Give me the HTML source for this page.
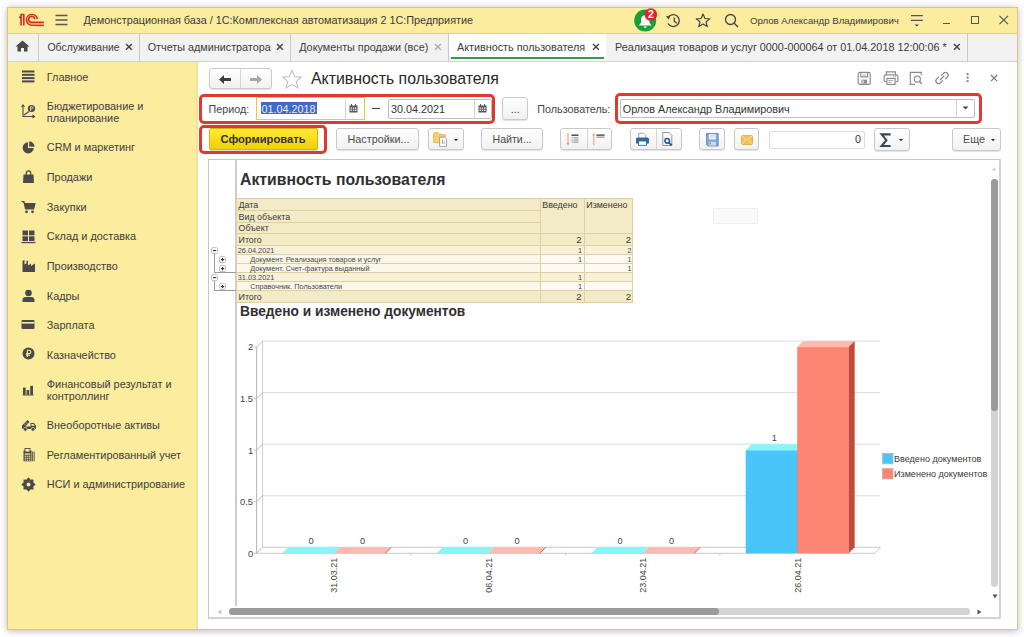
<!DOCTYPE html>
<html><head><meta charset="utf-8"><style>
html,body{margin:0;padding:0;}
body{width:1024px;height:637px;position:relative;overflow:hidden;background:#fff;font-family:"Liberation Sans", sans-serif;}
.t{position:absolute;white-space:nowrap;line-height:1;}
.r{position:absolute;}
svg.r{overflow:visible;}
</style></head><body>
<div class="r" style="left:7px;top:7px;width:1011px;height:623px;background:#fff;box-shadow:0 1px 7px rgba(0,0,0,0.28);"></div><div class="r" style="left:7px;top:7px;width:1011px;height:26px;background:#FBEC9E;"></div><div class="r" style="left:7px;top:33px;width:1011px;height:29px;background:#F2F2F2;border-bottom:1px solid #D2D2D2;box-sizing:border-box;"></div><div class="r" style="left:7px;top:62px;width:191px;height:568px;background:#FBEC9E;"></div><div class="r" style="left:196px;top:62px;width:2px;height:568px;background:#F3E395;"></div><div class="r" style="left:7px;top:7px;width:1011px;height:623px;border:1px solid #D8C77F;box-sizing:border-box;"></div><div class="r" style="left:7px;top:32.5px;width:1011px;height:1.0px;background:#E3D38A;"></div><svg class="r" style="left:14px;top:10px" width="36" height="20" viewBox="0 0 36 20">
<g fill="none" stroke="#DA2A22" stroke-width="1.65" stroke-linejoin="miter">
<path d="M5 7.3 H7.1 M7.1 4.5 V15.6 M6.3 4.5 H10.5 M9.8 4.5 V15.6"/>
<path d="M23.3 9.2 A5.4 5.4 0 1 0 17.9 15.3 H29.8"/>
<path d="M20.6 9.2 A3.0 3.0 0 1 0 17.6 12.3 H29.8"/>
</g>
<path d="M21.9 9.2 A4.2 4.2 0 1 0 17.8 13.8 H29.8" fill="none" stroke="#EE9A70" stroke-width="0.9"/>
</svg><svg class="r" style="left:55px;top:14px" width="14" height="12"><g stroke="#555" stroke-width="1.3"><path d="M0.5 1.5H12.5M0.5 6H12.5M0.5 10.5H12.5"/></g></svg><div class="t" style="left:83.50px;top:15.22px;font-size:10.84px;color:#3a3a3a;">Демонстрационная база / 1С:Комплексная автоматизация 2 1С:Предприятие</div><svg class="r" style="left:632px;top:8px" width="28" height="26" viewBox="0 0 28 26">
<circle cx="13.2" cy="12.5" r="11" fill="#17A03A"/>
<path d="M6.8 17.6 H19.6 L17.4 14.8 V11.5 A4.2 4.2 0 0 0 9 11.5 V14.8 Z" fill="#fff"/>
<path d="M11.6 18.6 H14.8 A1.6 1.4 0 0 1 11.6 18.6Z" fill="#fff"/>
<circle cx="18.8" cy="6.5" r="6.3" fill="#E8212B"/>
<text x="18.8" y="10.2" font-family="Liberation Sans" font-size="10.5" font-weight="bold" fill="#fff" text-anchor="middle">2</text>
</svg><svg class="r" style="left:665px;top:13px" width="18" height="16" viewBox="0 0 18 16">
<g fill="none" stroke="#444" stroke-width="1.3"><path d="M3.3 4.2 A6 6 0 1 1 3 10.5"/><path d="M9.3 4.5 V8.3 L11.8 10.3"/></g>
<path d="M1 3 L5.2 3.2 L3.6 6.8Z" fill="#444"/></svg><svg class="r" style="left:695px;top:13px" width="16" height="15" viewBox="0 0 16 15">
<path d="M8 1 L9.9 5.5 L14.7 5.8 L11 8.9 L12.2 13.6 L8 11 L3.8 13.6 L5 8.9 L1.3 5.8 L6.1 5.5Z" fill="none" stroke="#444" stroke-width="1.2" stroke-linejoin="round"/></svg><svg class="r" style="left:724px;top:13px" width="16" height="15" viewBox="0 0 16 15">
<g fill="none" stroke="#444" stroke-width="1.3"><circle cx="6.5" cy="6.5" r="5"/><path d="M10.2 10.2 L14 14"/></g></svg><div class="t" style="left:750.00px;top:15.64px;font-size:9.64px;color:#3a3a3a;">Орлов Александр Владимирович</div><svg class="r" style="left:905px;top:10px" width="20" height="20" viewBox="0 0 20 20"><path d="M6 5.6 H17.8 M6 10.4 H17.8" stroke="#555" stroke-width="1.2"/><path d="M9.6 14.4 H14 L11.8 16.6Z" fill="#444"/></svg><div class="r" style="left:942.5px;top:22.8px;width:7.5px;height:1.3000000000000007px;background:#555;"></div><div class="r" style="left:971px;top:16.3px;width:8px;height:7.899999999999999px;border:1.2px solid #555;box-sizing:border-box;"></div><svg class="r" style="left:995px;top:11px" width="18" height="18" viewBox="0 0 18 18"><path d="M4.5 4.8 L13 13.2 M13 4.8 L4.5 13.2" stroke="#555" stroke-width="1.15"/></svg><svg class="r" style="left:15px;top:40px" width="15" height="12" viewBox="0 0 15 12">
<path d="M7.5 0.5 L14.5 6.5 H12.5 V11.5 H9 V8 H6 V11.5 H2.5 V6.5 H0.5Z" fill="#4a4a4a"/></svg><div class="r" style="left:37.8px;top:33px;width:1.0px;height:28px;background:#C9C9C9;"></div><div class="r" style="left:139.0px;top:33px;width:1.0px;height:28px;background:#C9C9C9;"></div><div class="r" style="left:290.0px;top:33px;width:1.0px;height:28px;background:#C9C9C9;"></div><div class="r" style="left:448.0px;top:33px;width:1.0px;height:28px;background:#C9C9C9;"></div><div class="r" style="left:966.9px;top:33px;width:1.0px;height:28px;background:#C9C9C9;"></div><div class="r" style="left:449px;top:33.5px;width:156.5px;height:27.5px;background:#fff;"></div><div class="r" style="left:450.5px;top:57.3px;width:153.0px;height:2.0px;background:#2E9F4E;"></div><div class="t" style="left:47.50px;top:42.55px;font-size:10.45px;color:#3c3c3c;">Обслуживание</div><svg class="r" style="left:125.2px;top:43.0px" width="7.8" height="7.8"><path d="M1 1L6.8 6.8M6.8 1L1 6.8" stroke="#444" stroke-width="1.4"/></svg><div class="t" style="left:147.70px;top:42.26px;font-size:10.8px;color:#3c3c3c;">Отчеты администратора</div><svg class="r" style="left:276.4px;top:43.0px" width="7.8" height="7.8"><path d="M1 1L6.8 6.8M6.8 1L1 6.8" stroke="#444" stroke-width="1.4"/></svg><div class="t" style="left:299.20px;top:42.26px;font-size:10.8px;color:#3c3c3c;">Документы продажи (все)</div><svg class="r" style="left:433.9px;top:43.0px" width="7.8" height="7.8"><path d="M1 1L6.8 6.8M6.8 1L1 6.8" stroke="#aaa" stroke-width="1.3"/></svg><div class="t" style="left:457.00px;top:42.26px;font-size:10.8px;color:#3c3c3c;">Активность пользователя</div><svg class="r" style="left:591.6px;top:43.0px" width="7.8" height="7.8"><path d="M1 1L6.8 6.8M6.8 1L1 6.8" stroke="#444" stroke-width="1.4"/></svg><div class="t" style="left:615.00px;top:42.24px;font-size:10.82px;color:#3c3c3c;">Реализация товаров и услуг 0000-000064 от 01.04.2018 12:00:06 *</div><svg class="r" style="left:952.6px;top:43.0px" width="7.8" height="7.8"><path d="M1 1L6.8 6.8M6.8 1L1 6.8" stroke="#444" stroke-width="1.4"/></svg><div class="t" style="left:46.80px;top:71.52px;font-size:10.9px;color:#404040;">Главное</div><div class="t" style="left:46.80px;top:100.57px;font-size:10.9px;color:#404040;">Бюджетирование и</div><div class="t" style="left:46.80px;top:112.77px;font-size:10.9px;color:#404040;">планирование</div><div class="t" style="left:46.80px;top:142.07px;font-size:10.9px;color:#404040;">CRM и маркетинг</div><div class="t" style="left:46.80px;top:171.97px;font-size:10.9px;color:#404040;">Продажи</div><div class="t" style="left:46.80px;top:201.87px;font-size:10.9px;color:#404040;">Закупки</div><div class="t" style="left:46.80px;top:231.27px;font-size:10.9px;color:#404040;">Склад и доставка</div><div class="t" style="left:46.80px;top:260.97px;font-size:10.9px;color:#404040;">Производство</div><div class="t" style="left:46.80px;top:290.77px;font-size:10.9px;color:#404040;">Кадры</div><div class="t" style="left:46.80px;top:320.17px;font-size:10.9px;color:#404040;">Зарплата</div><div class="t" style="left:46.80px;top:350.07px;font-size:10.9px;color:#404040;">Казначейство</div><div class="t" style="left:46.80px;top:378.97px;font-size:10.9px;color:#404040;">Финансовый результат и</div><div class="t" style="left:46.80px;top:391.17px;font-size:10.9px;color:#404040;">контроллинг</div><div class="t" style="left:46.80px;top:420.17px;font-size:10.9px;color:#404040;">Внеоборотные активы</div><div class="t" style="left:46.80px;top:450.07px;font-size:10.9px;color:#404040;">Регламентированный учет</div><div class="t" style="left:46.80px;top:479.27px;font-size:10.9px;color:#404040;">НСИ и администрирование</div><svg class="r" style="left:22px;top:70px" width="13" height="13" viewBox="0 0 13 13"><g fill="#4a4a4a"><rect x="0" y="0.5" width="12.5" height="2"/><rect x="0" y="3.8" width="12.5" height="2"/><rect x="0" y="7.1" width="12.5" height="2"/><rect x="0" y="10.4" width="12.5" height="2"/></g></svg><svg class="r" style="left:21px;top:104px" width="15" height="15" viewBox="0 0 15 15"><g fill="none" stroke="#4a4a4a" stroke-width="1.1"><path d="M2 1.5 V12.5 H13.5"/><path d="M0.5 3 L2 1 L3.5 3"/><path d="M11.5 11 L13.5 12.5 L11.5 14"/><path d="M3 11 L8 7.5"/></g><circle cx="10.5" cy="4.5" r="3.6" fill="#4a4a4a"/><path d="M9.6 2.7 V7 M9.6 2.7 H11 A1 1 0 0 1 11 4.8 H9" stroke="#FBEC9E" stroke-width="0.8" fill="none"/></svg><svg class="r" style="left:22px;top:141px" width="13" height="13" viewBox="0 0 13 13"><path d="M6 1.2 A5.6 5.6 0 1 0 11.8 7 H6Z" fill="#4a4a4a"/><path d="M7.2 0.3 A5.6 5.6 0 0 1 12.6 5.8 H7.2Z" fill="#4a4a4a"/></svg><svg class="r" style="left:22px;top:170px" width="13" height="14" viewBox="0 0 13 14"><path d="M1.5 4.5 H11.5 L12 13 H1Z" fill="#4a4a4a"/><path d="M4.3 5 V3 A2.2 2.2 0 0 1 8.7 3 V5" fill="none" stroke="#4a4a4a" stroke-width="1.2"/></svg><svg class="r" style="left:21px;top:200px" width="15" height="14" viewBox="0 0 15 14"><path d="M0.5 1.5 H3 L4.5 9 H12.5 L14 3.5 H3.5" fill="#4a4a4a" stroke="#4a4a4a" stroke-width="1.2" stroke-linejoin="round"/><circle cx="5.5" cy="11.8" r="1.4" fill="#4a4a4a"/><circle cx="11.5" cy="11.8" r="1.4" fill="#4a4a4a"/></svg><svg class="r" style="left:21px;top:230px" width="15" height="14" viewBox="0 0 15 14"><g fill="#4a4a4a"><rect x="1.5" y="0.5" width="5.5" height="4.8"/><rect x="8" y="0.5" width="5.5" height="4.8"/><rect x="1.5" y="6.3" width="5.5" height="4.8"/><rect x="8" y="6.3" width="5.5" height="4.8"/><rect x="0.5" y="12" width="14" height="1.2"/></g></svg><svg class="r" style="left:22px;top:259px" width="14" height="14" viewBox="0 0 14 14"><path d="M0.5 13 V2 L2.5 0.8 V5.5 L4.5 4.5 V1.5 L6 2 V6.5 L9 4.5 V7 L13 4.5 V13Z" fill="#4a4a4a"/></svg><svg class="r" style="left:22px;top:289px" width="13" height="14" viewBox="0 0 13 14"><circle cx="6.5" cy="4" r="3.3" fill="#4a4a4a"/><path d="M0.5 13 V11 Q0.5 8 4 8 H9 Q12.5 8 12.5 11 V13Z" fill="#4a4a4a"/></svg><svg class="r" style="left:21px;top:319px" width="15" height="12" viewBox="0 0 15 12"><rect x="0.5" y="1" width="13" height="9" rx="1" fill="#4a4a4a"/><rect x="0.5" y="3" width="13" height="1.6" fill="#FBEC9E"/></svg><svg class="r" style="left:22px;top:347px" width="13" height="13" viewBox="0 0 13 13"><circle cx="6.5" cy="6.5" r="6" fill="#4a4a4a"/><path d="M5.3 3.2 V10 M4 8.3 H8 M5.3 3.2 H7.2 A1.6 1.6 0 0 1 7.2 6.6 H4" stroke="#FBEC9E" stroke-width="1.1" fill="none"/></svg><svg class="r" style="left:22px;top:385px" width="13" height="12" viewBox="0 0 13 12"><g fill="#4a4a4a"><rect x="1" y="2.6" width="2.7" height="7.2"/><rect x="4.6" y="5" width="2.6" height="4.8"/><rect x="8.2" y="0.8" width="2.8" height="9"/><rect x="0.6" y="9.6" width="11" height="0.9"/></g></svg><svg class="r" style="left:20.5px;top:419px" width="16" height="13" viewBox="0 0 16 13"><path d="M1 6.5 L6.5 1 L8.5 3 L4 8 H1Z" fill="#4a4a4a"/><path d="M3 4.5 L5 6.5 M4.5 3 L6.5 5" stroke="#FBEC9E" stroke-width="0.6"/><path d="M1 7.5 H9.5 V4 H13 L15 6.8 V10 H1Z" fill="#4a4a4a"/><path d="M10.4 4.9 H12.5 L13.8 6.8 H10.4Z" fill="#FBEC9E"/><circle cx="4.3" cy="10.3" r="1.9" fill="#4a4a4a" stroke="#FBEC9E" stroke-width="0.7"/><circle cx="12" cy="10.3" r="1.9" fill="#4a4a4a" stroke="#FBEC9E" stroke-width="0.7"/></svg><svg class="r" style="left:22.5px;top:448px" width="12" height="14" viewBox="0 0 12 14"><rect x="0.5" y="2.5" width="8" height="10.8" fill="#4a4a4a"/><rect x="2" y="0.5" width="5" height="3.5" fill="#FBEC9E" stroke="#4a4a4a" stroke-width="0.9"/><g fill="#FBEC9E"><rect x="1.7" y="5.4" width="5.6" height="1.3"/><rect x="1.7" y="7.7" width="1.4" height="1.1"/><rect x="3.8" y="7.7" width="1.4" height="1.1"/><rect x="5.9" y="7.7" width="1.4" height="1.1"/><rect x="1.7" y="9.7" width="1.4" height="1.1"/><rect x="3.8" y="9.7" width="1.4" height="1.1"/><rect x="5.9" y="9.7" width="1.4" height="1.1"/><rect x="1.7" y="11.6" width="1.4" height="1"/><rect x="3.8" y="11.6" width="1.4" height="1"/><rect x="5.9" y="11.6" width="1.4" height="1"/></g><g fill="#4a4a4a"><rect x="9.2" y="3.5" width="0.9" height="9.8"/><rect x="10.7" y="3.5" width="0.9" height="9.8"/></g></svg><svg class="r" style="left:22px;top:478px" width="13" height="13" viewBox="0 0 13 13"><polygon points="12.80,6.50 10.75,8.26 10.95,10.95 8.26,10.75 6.50,12.80 4.74,10.75 2.05,10.95 2.25,8.26 0.20,6.50 2.25,4.74 2.05,2.05 4.74,2.25 6.50,0.20 8.26,2.25 10.95,2.05 10.75,4.74" fill="#4a4a4a" stroke="#4a4a4a" stroke-width="1.2" stroke-linejoin="round"/><circle cx="6.5" cy="6.5" r="1.9" fill="#FBEC9E"/></svg><div class="r" style="left:209px;top:68.3px;width:63px;height:20.900000000000006px;box-sizing:border-box;border:1px solid #C9C9C9;border-radius:3px;background:linear-gradient(#FFFFFF,#F1F1F1);box-shadow:0 1px 1px rgba(0,0,0,0.12);"></div><div class="r" style="left:240px;top:69px;width:1px;height:19.5px;background:#D5D5D5;"></div><svg class="r" style="left:218px;top:73.8px" width="14" height="11" viewBox="0 0 14 11"><path d="M1 5.5 L6 1 V4 H13 V7 H6 V10Z" fill="#3c3c3c"/></svg><svg class="r" style="left:249px;top:73.8px" width="14" height="11" viewBox="0 0 14 11"><path d="M13 5.5 L8 1 V4 H1 V7 H8 V10Z" fill="#A8A8A8"/></svg><svg class="r" style="left:281px;top:68.5px" width="22" height="21" viewBox="0 0 22 21"><path d="M11 1.2 L13.6 7.6 L20.4 8 L15.2 12.4 L16.9 19.1 L11 15.4 L5.1 19.1 L6.8 12.4 L1.6 8 L8.4 7.6Z" fill="none" stroke="#B9C3CA" stroke-width="1.1" stroke-linejoin="round"/></svg><div class="t" style="left:311.00px;top:71.08px;font-size:15.85px;color:#262626;">Активность пользователя</div><svg class="r" style="left:857px;top:71px" width="15" height="15" viewBox="0 0 15 15"><g fill="none" stroke="#8a8a8a" stroke-width="1.15"><rect x="1.2" y="1.4" width="12" height="12" rx="1.6"/><path d="M3.8 1.6 V5.8 H10.6 V1.6"/></g><path d="M5.2 3.2 H9.2 M5.2 4.4 H9.2" stroke="#b5b5b5" stroke-width="0.6"/><rect x="4.4" y="8.6" width="5.6" height="4" fill="#8a8a8a"/><rect x="4.9" y="9.3" width="2.2" height="3" fill="#c9c9c9"/></svg><svg class="r" style="left:883px;top:71px" width="16" height="15" viewBox="0 0 16 15"><g fill="none" stroke="#8a8a8a" stroke-width="1.15"><path d="M3.3 3.8 V0.9 H12.4 V3.8"/><path d="M3.4 10.6 H2.5 Q1.1 10.6 1.1 9.2 V5.3 Q1.1 3.8 2.6 3.8 H13.4 Q14.9 3.8 14.9 5.3 V9.2 Q14.9 10.6 13.5 10.6 H12.5"/><rect x="3.9" y="7.4" width="8.2" height="6.1" fill="#fff"/></g><path d="M5.4 9.4 H10.2 M5.4 11.4 H8.6" stroke="#8a8a8a" stroke-width="0.8"/><circle cx="10.8" cy="5.6" r="0.55" fill="#8a8a8a"/><circle cx="12.6" cy="5.6" r="0.55" fill="#8a8a8a"/></svg><svg class="r" style="left:909px;top:71px" width="14" height="15" viewBox="0 0 14 15"><g fill="none" stroke="#8a8a8a" stroke-width="1.15"><path d="M5.8 13.4 H1.3 V1.4 H12.3 V4.3"/><circle cx="8.3" cy="8.1" r="3.1"/></g><path d="M10.5 10.4 L12.8 12.7" stroke="#8a8a8a" stroke-width="1.6"/></svg><svg class="r" style="left:935px;top:71px" width="15" height="14" viewBox="0 0 15 14"><g fill="none" stroke="#8a8a8a" stroke-width="1.25" stroke-linecap="round"><path d="M6.4 4.4 L8.7 2.1 A2.7 2.7 0 0 1 12.5 5.9 L10.6 7.8"/><path d="M7.6 9.6 L5.3 11.9 A2.7 2.7 0 0 1 1.5 8.1 L3.4 6.2"/><path d="M5.2 8.8 L8.8 5.2"/></g></svg><svg class="r" style="left:965px;top:72px" width="5" height="11" viewBox="0 0 5 11"><g fill="#8a8a8a"><circle cx="2.6" cy="2.1" r="1.2"/><circle cx="2.6" cy="5.6" r="1.2"/><circle cx="2.6" cy="9.1" r="1.2"/></g></svg><svg class="r" style="left:989.7px;top:74.2px" width="8.2" height="8.2"><path d="M1 1L7.2 7.2M7.2 1L1 7.2" stroke="#777" stroke-width="1.2"/></svg><div class="t" style="left:208.50px;top:103.90px;font-size:10.75px;color:#444;">Период:</div><div class="r" style="left:256.4px;top:97.1px;width:108.60000000000002px;height:22.5px;box-sizing:border-box;border:1.5px solid #F5C431;background:#fff;"></div><div class="r" style="left:345px;top:99px;width:1px;height:19px;background:#D4D4D4;"></div><div class="r" style="left:261.1px;top:102.3px;width:55.69999999999999px;height:12.0px;background:#4169C8;"></div><div class="t" style="left:261.50px;top:103.86px;font-size:10.8px;color:#E6ECF8;">01.04.2018</div><svg class="r" style="left:349.2px;top:104.2px" width="9" height="9" viewBox="0 0 9 9"><g fill="#555"><rect x="0.5" y="1.5" width="8" height="7"/></g><g fill="#fff"><rect x="1.5" y="3.5" width="1.5" height="1.2"/><rect x="3.8" y="3.5" width="1.5" height="1.2"/><rect x="6" y="3.5" width="1.5" height="1.2"/><rect x="1.5" y="5.7" width="1.5" height="1.2"/><rect x="3.8" y="5.7" width="1.5" height="1.2"/><rect x="6" y="5.7" width="1.5" height="1.2"/></g><rect x="2" y="0" width="1" height="2" fill="#555"/><rect x="6" y="0" width="1" height="2" fill="#555"/></svg><div class="r" style="left:372px;top:108px;width:7.5px;height:1.2000000000000028px;background:#444;"></div><div class="r" style="left:387.8px;top:99px;width:104.19999999999999px;height:19.5px;box-sizing:border-box;border:1px solid #BDBDBD;border-radius:2px;background:#fff;"></div><div class="r" style="left:474px;top:99px;width:1px;height:18.5px;background:#D4D4D4;"></div><div class="t" style="left:391.00px;top:103.86px;font-size:10.8px;color:#333;">30.04.2021</div><svg class="r" style="left:478px;top:103.5px" width="9" height="9" viewBox="0 0 9 9"><g fill="#555"><rect x="0.5" y="1.5" width="8" height="7"/></g><g fill="#fff"><rect x="1.5" y="3.5" width="1.5" height="1.2"/><rect x="3.8" y="3.5" width="1.5" height="1.2"/><rect x="6" y="3.5" width="1.5" height="1.2"/><rect x="1.5" y="5.7" width="1.5" height="1.2"/><rect x="3.8" y="5.7" width="1.5" height="1.2"/><rect x="6" y="5.7" width="1.5" height="1.2"/></g><rect x="2" y="0" width="1" height="2" fill="#555"/><rect x="6" y="0" width="1" height="2" fill="#555"/></svg><div class="r" style="left:501.5px;top:96.8px;width:26.299999999999955px;height:23.0px;box-sizing:border-box;border:1px solid #C9C9C9;border-radius:3px;background:linear-gradient(#FFFFFF,#F1F1F1);box-shadow:0 1px 1px rgba(0,0,0,0.12);"></div><div class="t" style="left:510.80px;top:104.11px;font-size:10.5px;color:#333;">...</div><div class="t" style="left:537.30px;top:103.86px;font-size:10.8px;color:#444;">Пользователь:</div><div class="r" style="left:620px;top:98.5px;width:354.5px;height:19.0px;box-sizing:border-box;border:1px solid #BDBDBD;border-radius:2px;background:#fff;"></div><div class="r" style="left:956px;top:99.5px;width:1px;height:17.0px;background:#D4D4D4;"></div><div class="t" style="left:622.80px;top:103.86px;font-size:10.8px;color:#333;">Орлов Александр Владимирович</div><svg class="r" style="left:962px;top:106px" width="7" height="4" viewBox="0 0 7 4"><path d="M0.5 0.5H6.5L3.5 3.5Z" fill="#444"/></svg><div class="r" style="left:199px;top:93.8px;width:296px;height:29.799999999999997px;box-sizing:border-box;border:3.4px solid #E03A30;border-radius:5px;"></div><div class="r" style="left:615px;top:93px;width:367px;height:30.599999999999994px;box-sizing:border-box;border:3.4px solid #E03A30;border-radius:5px;"></div><div class="r" style="left:199px;top:125px;width:127.80000000000001px;height:28.80000000000001px;box-sizing:border-box;border:3.4px solid #E03A30;border-radius:5px;"></div><div class="r" style="left:209px;top:128.2px;width:108.60000000000002px;height:21.600000000000023px;box-sizing:border-box;border:1px solid #D4B800;border-radius:2px;background:linear-gradient(#FFEA3A,#F3CF00);box-shadow:0 1px 1px rgba(0,0,0,0.15);"></div><div class="t" style="left:220.50px;top:133.75px;font-size:11.16px;color:#333;font-weight:bold;">Сформировать</div><div class="r" style="left:335.5px;top:128px;width:83.69999999999999px;height:22.30000000000001px;box-sizing:border-box;border:1px solid #C9C9C9;border-radius:3px;background:linear-gradient(#FFFFFF,#F1F1F1);box-shadow:0 1px 1px rgba(0,0,0,0.12);"></div><div class="t" style="left:347.50px;top:134.06px;font-size:10.8px;color:#4a4a4a;">Настройки...</div><div class="r" style="left:427.5px;top:128px;width:36.0px;height:22.30000000000001px;box-sizing:border-box;border:1px solid #C9C9C9;border-radius:3px;background:linear-gradient(#FFFFFF,#F1F1F1);box-shadow:0 1px 1px rgba(0,0,0,0.12);"></div><svg class="r" style="left:433px;top:132px" width="15" height="16" viewBox="0 0 15 16"><path d="M0.6 2.2 Q0.6 0.7 2 0.7 H4.6 Q5.6 0.7 6.2 1.9 L6.6 2.6 H12.2 V10.6 H0.6Z" fill="#F7D36A" stroke="#DDAA45" stroke-width="0.8"/><path d="M0.6 4.2 H12.2" stroke="#F0C250" stroke-width="0.6"/><path d="M6.6 5.2 H11.6 L13.6 7.2 V14.4 H6.6Z" fill="#fff" stroke="#8E9DB3" stroke-width="0.9"/><rect x="8.9" y="7.9" width="1.1" height="3.3" fill="#F07A7A"/><rect x="10.7" y="8.8" width="1.1" height="2.4" fill="#9ED79E"/><path d="M8.2 11.5 H12" stroke="#C9A0A0" stroke-width="0.5"/></svg><svg class="r" style="left:453.6px;top:138.8px" width="4" height="3" viewBox="0 0 4 3"><path d="M0 0H4L2 2.2Z" fill="#333"/></svg><div class="r" style="left:481px;top:128px;width:61.799999999999955px;height:22.30000000000001px;box-sizing:border-box;border:1px solid #C9C9C9;border-radius:3px;background:linear-gradient(#FFFFFF,#F1F1F1);box-shadow:0 1px 1px rgba(0,0,0,0.12);"></div><div class="t" style="left:492.50px;top:134.23px;font-size:10.6px;color:#4a4a4a;">Найти...</div><div class="r" style="left:560px;top:128px;width:51.5px;height:22.30000000000001px;box-sizing:border-box;border:1px solid #C9C9C9;border-radius:3px;background:linear-gradient(#FFFFFF,#F1F1F1);box-shadow:0 1px 1px rgba(0,0,0,0.12);"></div><div class="r" style="left:586.5px;top:128.5px;width:1.0px;height:21.30000000000001px;background:#D5D5D5;"></div><svg class="r" style="left:565px;top:132px" width="17" height="14" viewBox="0 0 17 14"><path d="M3 1 V12.5" stroke="#F39A6E" stroke-width="1"/><path d="M1.6 11 L3 13.6 L4.4 11Z" fill="#F39A6E"/><rect x="6.5" y="2.4" width="7" height="1.6" fill="#555"/><g fill="#9a9a9a"><rect x="6.5" y="5.2" width="1.2" height="1.2"/><rect x="8.5" y="5.2" width="5" height="1.2"/><rect x="6.5" y="7.4" width="1.2" height="1.2"/><rect x="8.5" y="7.4" width="5" height="1.2"/><rect x="6.5" y="9.6" width="1.2" height="1.2"/><rect x="8.5" y="9.6" width="5" height="1.2"/></g></svg><svg class="r" style="left:591px;top:132px" width="17" height="14" viewBox="0 0 17 14"><path d="M2.8 13.3 V2.2" stroke="#F39A6E" stroke-width="1"/><path d="M1.4 3.6 L2.8 1 L4.2 3.6Z" fill="#F39A6E"/><rect x="5.4" y="2.4" width="8.2" height="1.5" fill="#555"/><rect x="5.4" y="4.6" width="8.2" height="1.2" fill="#9a9a9a"/></svg><div class="r" style="left:629.5px;top:128px;width:52.0px;height:22.30000000000001px;box-sizing:border-box;border:1px solid #C9C9C9;border-radius:3px;background:linear-gradient(#FFFFFF,#F1F1F1);box-shadow:0 1px 1px rgba(0,0,0,0.12);"></div><div class="r" style="left:656px;top:128.5px;width:1px;height:21.30000000000001px;background:#D5D5D5;"></div><svg class="r" style="left:635px;top:132px" width="15" height="15" viewBox="0 0 15 15"><path d="M3.8 6 V1.3 H8.6 L10.8 3.5 V6" fill="#fff" stroke="#8E9BB0" stroke-width="0.9"/><rect x="1" y="5.5" width="13" height="6.3" rx="1.6" fill="#2F6AA3"/><rect x="3.6" y="9" width="7.8" height="4.3" fill="#fff" stroke="#2F6AA3" stroke-width="0.9"/></svg><svg class="r" style="left:661px;top:131px" width="15" height="16" viewBox="0 0 15 16"><path d="M1.8 1.5 H8 L10.8 4.3 V14.5 H1.8Z" fill="#fff" stroke="#7A8AA3" stroke-width="0.9"/><circle cx="6.2" cy="9.8" r="2.3" fill="none" stroke="#1F5C9E" stroke-width="1.6"/><path d="M7.9 11.6 L10.8 14.4" stroke="#1F5C9E" stroke-width="1.9"/></svg><div class="r" style="left:699.2px;top:128px;width:26.299999999999955px;height:22.30000000000001px;box-sizing:border-box;border:1px solid #C9C9C9;border-radius:3px;background:linear-gradient(#FFFFFF,#F1F1F1);box-shadow:0 1px 1px rgba(0,0,0,0.12);"></div><svg class="r" style="left:706px;top:132.5px" width="13" height="14" viewBox="0 0 13 14"><path d="M0.5 0.5 H12.2 V13 H1.8 L0.5 11.7Z" fill="#7FA7DA" stroke="#5B85BC" stroke-width="0.8"/><rect x="2.9" y="1.2" width="6.9" height="5.2" fill="#F4F7FB"/><path d="M3.8 2.8H9M3.8 4.3H9" stroke="#A9C0DE" stroke-width="0.6"/><rect x="2.9" y="8.8" width="6.9" height="3.8" fill="#D5DBD9"/><rect x="3.6" y="9.6" width="1" height="1.8" fill="#2F64A8"/></svg><div class="r" style="left:733.5px;top:128px;width:25.5px;height:22.30000000000001px;box-sizing:border-box;border:1px solid #C9C9C9;border-radius:3px;background:linear-gradient(#FFFFFF,#F1F1F1);box-shadow:0 1px 1px rgba(0,0,0,0.12);"></div><svg class="r" style="left:740.5px;top:134.5px" width="12" height="10" viewBox="0 0 12 10"><rect x="0.5" y="0.5" width="11" height="9" rx="1.2" fill="#F2C25A" stroke="#E0A640" stroke-width="0.8"/><path d="M0.8 1 L6 5.3 L11.2 1 M0.8 9 L4.4 5 M11.2 9 L7.6 5" fill="none" stroke="#FBE3A6" stroke-width="0.8"/></svg><div class="r" style="left:768.5px;top:130.5px;width:96.0px;height:18.5px;box-sizing:border-box;border:1px solid #DCDCDC;border-radius:2px;background:#fff;"></div><div class="t" style="right:163.00px;top:134.36px;font-size:10.8px;color:#333;">0</div><div class="r" style="left:873.5px;top:128px;width:36.0px;height:22.80000000000001px;box-sizing:border-box;border:1px solid #C9C9C9;border-radius:3px;background:linear-gradient(#FFFFFF,#F1F1F1);box-shadow:0 1px 1px rgba(0,0,0,0.12);"></div><svg class="r" style="left:880px;top:132.5px" width="12" height="14" viewBox="0 0 12 14"><path d="M10.6 1.4 H1.6 L6.4 7.2 L1.6 13 H10.6" fill="none" stroke="#34475A" stroke-width="2.1" stroke-linejoin="miter"/></svg><svg class="r" style="left:899px;top:139px" width="4" height="3" viewBox="0 0 4 3"><path d="M0 0H4L2 2.2Z" fill="#333"/></svg><div class="r" style="left:951.5px;top:128px;width:49.5px;height:22.80000000000001px;box-sizing:border-box;border:1px solid #C9C9C9;border-radius:3px;background:linear-gradient(#FFFFFF,#F1F1F1);box-shadow:0 1px 1px rgba(0,0,0,0.12);"></div><div class="t" style="left:963.00px;top:134.36px;font-size:10.8px;color:#505050;">Еще</div><svg class="r" style="left:990.8px;top:139px" width="4" height="3" viewBox="0 0 4 3"><path d="M0 0H4L2 2.2Z" fill="#333"/></svg><div class="r" style="left:208.3px;top:158.9px;width:793.2px;height:459.9px;box-sizing:border-box;border:1.5px solid #C6C6C6;border-right:2px solid #D2D2D2;border-bottom:2px solid #D2D2D2;"></div><div class="r" style="left:235.2px;top:160px;width:1.8000000000000114px;height:445.5px;background:#CDCDCD;"></div><div class="r" style="left:991px;top:179px;width:7px;height:407.5px;background:#D3D3D3;border-radius:3.5px;"></div><div class="r" style="left:991px;top:179px;width:7px;height:231.8px;background:#9A9A9A;border-radius:3.5px;"></div><svg class="r" style="left:992.3px;top:166.8px" width="5" height="4" viewBox="0 0 5 4"><path d="M0 3.6 L2.2 0 L4.4 3.6Z" fill="#CFCFCF"/></svg><svg class="r" style="left:991.5px;top:593.5px" width="6" height="5" viewBox="0 0 6 5"><path d="M0.5 0.5 L3 4.5 L5.5 0.5Z" fill="#555"/></svg><div class="r" style="left:229px;top:608px;width:740.5px;height:7px;background:#D3D3D3;border-radius:3.5px;"></div><div class="r" style="left:229px;top:608px;width:489.5px;height:7px;background:#9A9A9A;border-radius:3.5px;"></div><svg class="r" style="left:216.5px;top:609px" width="5" height="6" viewBox="0 0 5 6"><path d="M4.5 0.5 L0.5 3 L4.5 5.5Z" fill="#C8C8C8"/></svg><svg class="r" style="left:976.5px;top:609px" width="5" height="6" viewBox="0 0 5 6"><path d="M0.5 0.5 L4.5 3 L0.5 5.5Z" fill="#555"/></svg><div class="t" style="left:240.00px;top:171.85px;font-size:15.77px;color:#303030;font-weight:bold;">Активность пользователя</div><div class="r" style="left:712.5px;top:208.3px;width:45.299999999999955px;height:15.699999999999989px;box-sizing:border-box;background:#F9F9F9;border:1px solid #F0F0F0;"></div><div class="r" style="left:236px;top:198.5px;width:396.79999999999995px;height:47.19999999999999px;background:#F3EAC6;"></div><div class="r" style="left:236px;top:245.7px;width:396.79999999999995px;height:8.800000000000011px;background:#F7F1D9;"></div><div class="r" style="left:236px;top:254.5px;width:396.79999999999995px;height:8.800000000000011px;background:#FBF7E9;"></div><div class="r" style="left:540.2px;top:254.5px;width:92.59999999999991px;height:8.800000000000011px;background:#FCFAF1;"></div><div class="r" style="left:236px;top:263.3px;width:396.79999999999995px;height:8.699999999999989px;background:#FBF7E9;"></div><div class="r" style="left:540.2px;top:263.3px;width:92.59999999999991px;height:8.699999999999989px;background:#FCFAF1;"></div><div class="r" style="left:236px;top:272px;width:396.79999999999995px;height:9.399999999999977px;background:#F7F1D9;"></div><div class="r" style="left:236px;top:281.4px;width:396.79999999999995px;height:9.200000000000045px;background:#FBF7E9;"></div><div class="r" style="left:540.2px;top:281.4px;width:92.59999999999991px;height:9.200000000000045px;background:#FCFAF1;"></div><div class="r" style="left:236px;top:290.6px;width:396.79999999999995px;height:12.299999999999955px;background:#F3EAC6;"></div><div class="r" style="left:236px;top:198.0px;width:396.79999999999995px;height:1.0px;background:#DED0A0;"></div><div class="r" style="left:236px;top:210.0px;width:304.20000000000005px;height:1.0px;background:#DED0A0;"></div><div class="r" style="left:236px;top:221.7px;width:304.20000000000005px;height:1.0px;background:#DED0A0;"></div><div class="r" style="left:236px;top:233.0px;width:396.79999999999995px;height:1.0px;background:#DED0A0;"></div><div class="r" style="left:236px;top:245.2px;width:396.79999999999995px;height:1.0px;background:#DED0A0;"></div><div class="r" style="left:236px;top:254.0px;width:396.79999999999995px;height:1.0px;background:#DED0A0;"></div><div class="r" style="left:236px;top:262.8px;width:396.79999999999995px;height:1.0px;background:#DED0A0;"></div><div class="r" style="left:236px;top:271.5px;width:396.79999999999995px;height:1.0px;background:#DED0A0;"></div><div class="r" style="left:236px;top:280.9px;width:396.79999999999995px;height:1.0px;background:#DED0A0;"></div><div class="r" style="left:236px;top:290.1px;width:396.79999999999995px;height:1.0px;background:#DED0A0;"></div><div class="r" style="left:236px;top:302.4px;width:396.79999999999995px;height:1.0px;background:#DED0A0;"></div><div class="r" style="left:235.5px;top:198.5px;width:1.0px;height:104.39999999999998px;background:#DED0A0;"></div><div class="r" style="left:539.7px;top:198.5px;width:1.0px;height:104.39999999999998px;background:#DED0A0;"></div><div class="r" style="left:583.9px;top:198.5px;width:1.0px;height:104.39999999999998px;background:#DED0A0;"></div><div class="r" style="left:632.3px;top:198.5px;width:1.0px;height:104.89999999999998px;background:#DED0A0;"></div><div class="t" style="left:238.50px;top:201.17px;font-size:8.9px;color:#3a3a3a;">Дата</div><div class="t" style="left:238.50px;top:212.57px;font-size:8.9px;color:#3a3a3a;">Вид объекта</div><div class="t" style="left:238.50px;top:224.07px;font-size:8.9px;color:#3a3a3a;">Объект</div><div class="t" style="left:238.50px;top:236.27px;font-size:8.9px;color:#3a3a3a;">Итого</div><div class="t" style="left:542.30px;top:201.17px;font-size:8.9px;color:#3a3a3a;">Введено</div><div class="t" style="left:586.30px;top:201.17px;font-size:8.9px;color:#3a3a3a;">Изменено</div><div class="t" style="right:442.50px;top:235.46px;font-size:9.5px;color:#3a3a3a;">2</div><div class="t" style="right:393.00px;top:235.46px;font-size:9.5px;color:#3a3a3a;">2</div><div class="t" style="right:442.50px;top:292.26px;font-size:9.5px;color:#3a3a3a;">2</div><div class="t" style="right:393.00px;top:292.26px;font-size:9.5px;color:#3a3a3a;">2</div><div class="t" style="left:238.50px;top:293.27px;font-size:8.9px;color:#3a3a3a;">Итого</div><div class="t" style="left:237.80px;top:246.82px;font-size:7.3px;color:#484848;">26.04.2021</div><div class="t" style="right:442.00px;top:246.82px;font-size:7.3px;color:#484848;">1</div><div class="t" style="right:392.50px;top:246.82px;font-size:7.3px;color:#484848;">2</div><div class="t" style="left:250.20px;top:256.02px;font-size:7.3px;color:#484848;">Документ. Реализация товаров и услуг</div><div class="t" style="right:442.00px;top:256.02px;font-size:7.3px;color:#484848;">1</div><div class="t" style="right:392.50px;top:256.02px;font-size:7.3px;color:#484848;">1</div><div class="t" style="left:250.20px;top:265.02px;font-size:7.3px;color:#484848;">Документ. Счет-фактура выданный</div><div class="t" style="right:392.50px;top:265.02px;font-size:7.3px;color:#484848;">1</div><div class="t" style="left:237.80px;top:273.92px;font-size:7.3px;color:#484848;">31.03.2021</div><div class="t" style="right:442.00px;top:273.92px;font-size:7.3px;color:#484848;">1</div><div class="t" style="left:250.20px;top:283.12px;font-size:7.3px;color:#484848;">Справочник. Пользователи</div><div class="t" style="right:442.00px;top:283.12px;font-size:7.3px;color:#484848;">1</div><div class="r" style="left:214.2px;top:253.5px;width:0.8000000000000114px;height:19.30000000000001px;background:#9a9a9a;"></div><div class="r" style="left:214.2px;top:272.3px;width:21.80000000000001px;height:0.8000000000000114px;background:#9a9a9a;"></div><div class="r" style="left:214.2px;top:280.5px;width:0.8000000000000114px;height:9.800000000000011px;background:#9a9a9a;"></div><div class="r" style="left:214.2px;top:289.8px;width:21.80000000000001px;height:0.8000000000000114px;background:#9a9a9a;"></div><svg class="r" style="left:211.1px;top:246.8px" width="7" height="7" viewBox="0 0 7 7"><rect x="0.6" y="0.6" width="6" height="6" rx="1.3" fill="#fff" stroke="#BDBDBD" stroke-width="1"/><path d="M1.9 3.6H5.3" stroke="#333" stroke-width="1.1"/></svg><svg class="r" style="left:211.1px;top:273.8px" width="7" height="7" viewBox="0 0 7 7"><rect x="0.6" y="0.6" width="6" height="6" rx="1.3" fill="#fff" stroke="#BDBDBD" stroke-width="1"/><path d="M1.9 3.6H5.3" stroke="#333" stroke-width="1.1"/></svg><svg class="r" style="left:219.4px;top:255.8px" width="7" height="7" viewBox="0 0 7 7"><rect x="0.6" y="0.6" width="6" height="6" rx="1.3" fill="#fff" stroke="#BDBDBD" stroke-width="1"/><path d="M1.9 3.6H5.3" stroke="#333" stroke-width="1.1"/><path d="M3.6 1.9V5.3" stroke="#333" stroke-width="1.1"/></svg><svg class="r" style="left:219.4px;top:264.8px" width="7" height="7" viewBox="0 0 7 7"><rect x="0.6" y="0.6" width="6" height="6" rx="1.3" fill="#fff" stroke="#BDBDBD" stroke-width="1"/><path d="M1.9 3.6H5.3" stroke="#333" stroke-width="1.1"/><path d="M3.6 1.9V5.3" stroke="#333" stroke-width="1.1"/></svg><svg class="r" style="left:219.4px;top:282.8px" width="7" height="7" viewBox="0 0 7 7"><rect x="0.6" y="0.6" width="6" height="6" rx="1.3" fill="#fff" stroke="#BDBDBD" stroke-width="1"/><path d="M1.9 3.6H5.3" stroke="#333" stroke-width="1.1"/><path d="M3.6 1.9V5.3" stroke="#333" stroke-width="1.1"/></svg><div class="t" style="left:240.00px;top:305.15px;font-size:13.76px;color:#303030;font-weight:bold;">Введено и изменено документов</div><svg class="r" style="left:0;top:0" width="1024" height="637" font-family="Liberation Sans"><path d="M262.6 495.75 H880.4" stroke="#DCDCDC" stroke-width="1"/><path d="M262.6 444.20 H880.4" stroke="#DCDCDC" stroke-width="1"/><path d="M262.6 392.65 H880.4" stroke="#DCDCDC" stroke-width="1"/><path d="M262.6 341.10 H880.4" stroke="#DCDCDC" stroke-width="1"/><path d="M262.6 547.30 V341.10" stroke="#CFCFCF" stroke-width="1"/><path d="M256.6 553.30 V347.10" stroke="#B5B5B5" stroke-width="1"/><path d="M253.60000000000002 553.30 H256.6 L262.6 547.30" stroke="#BDBDBD" stroke-width="1" fill="none"/><path d="M253.60000000000002 501.75 H256.6 L262.6 495.75" stroke="#BDBDBD" stroke-width="1" fill="none"/><path d="M253.60000000000002 450.20 H256.6 L262.6 444.20" stroke="#BDBDBD" stroke-width="1" fill="none"/><path d="M253.60000000000002 398.65 H256.6 L262.6 392.65" stroke="#BDBDBD" stroke-width="1" fill="none"/><path d="M253.60000000000002 347.10 H256.6 L262.6 341.10" stroke="#BDBDBD" stroke-width="1" fill="none"/><path d="M256.6 553.3 H874.4 L880.4 547.3 H262.6 Z" fill="#fff" stroke="#C8C8C8" stroke-width="1"/><path d="M411.05 553.3 V555.3" stroke="#C8C8C8" stroke-width="1"/><path d="M565.50 553.3 V555.3" stroke="#C8C8C8" stroke-width="1"/><path d="M719.95 553.3 V555.3" stroke="#C8C8C8" stroke-width="1"/><path d="M282.33 553.30 L288.33 547.30 H339.83 L333.83 553.30Z" fill="#86F6FA"/><text x="311.08" y="543.80" font-size="9.2" fill="#444" text-anchor="middle">0</text><path d="M333.83 553.30 L339.83 547.30 H391.33 L385.33 553.30Z" fill="#FDBBAE"/><path d="M385.33 553.30 L391.33 547.30" stroke="#D9604F" stroke-width="1"/><text x="362.58" y="543.80" font-size="9.2" fill="#444" text-anchor="middle">0</text><text transform="translate(337.23 557.8) rotate(-90)" font-size="9.0" fill="#444" text-anchor="end">31.03.21</text><path d="M436.77 553.30 L442.77 547.30 H494.27 L488.27 553.30Z" fill="#86F6FA"/><text x="465.52" y="543.80" font-size="9.2" fill="#444" text-anchor="middle">0</text><path d="M488.27 553.30 L494.27 547.30 H545.77 L539.77 553.30Z" fill="#FDBBAE"/><path d="M539.77 553.30 L545.77 547.30" stroke="#D9604F" stroke-width="1"/><text x="517.02" y="543.80" font-size="9.2" fill="#444" text-anchor="middle">0</text><text transform="translate(491.67 557.8) rotate(-90)" font-size="9.0" fill="#444" text-anchor="end">06.04.21</text><path d="M591.23 553.30 L597.23 547.30 H648.73 L642.73 553.30Z" fill="#86F6FA"/><text x="619.98" y="543.80" font-size="9.2" fill="#444" text-anchor="middle">0</text><path d="M642.73 553.30 L648.73 547.30 H700.23 L694.23 553.30Z" fill="#FDBBAE"/><path d="M694.23 553.30 L700.23 547.30" stroke="#D9604F" stroke-width="1"/><text x="671.48" y="543.80" font-size="9.2" fill="#444" text-anchor="middle">0</text><text transform="translate(646.12 557.8) rotate(-90)" font-size="9.0" fill="#444" text-anchor="end">23.04.21</text><rect x="745.67" y="450.20" width="51.5" height="103.10" fill="#48C6FC"/><path d="M745.67 450.20 L751.67 444.20 H803.17 L797.17 450.20Z" fill="#86F6FA"/><path d="M797.17 450.20 L803.17 444.20 V547.30 L797.17 553.30Z" fill="#2F9BCB"/><text x="774.42" y="440.70" font-size="9.2" fill="#444" text-anchor="middle">1</text><rect x="797.17" y="347.10" width="51.5" height="206.20" fill="#FD8574"/><path d="M797.17 347.10 L803.17 341.10 H854.67 L848.67 347.10Z" fill="#FDBBAE"/><path d="M848.67 347.10 L854.67 341.10 V547.30 L848.67 553.30Z" fill="#C24A3B"/><text transform="translate(800.57 557.8) rotate(-90)" font-size="9.0" fill="#444" text-anchor="end">26.04.21</text><text x="253.10000000000002" y="556.60" font-size="9.4" fill="#444" text-anchor="end">0</text><text x="253.10000000000002" y="505.05" font-size="9.4" fill="#444" text-anchor="end">0.5</text><text x="253.10000000000002" y="453.50" font-size="9.4" fill="#444" text-anchor="end">1</text><text x="253.10000000000002" y="401.95" font-size="9.4" fill="#444" text-anchor="end">1.5</text><text x="253.10000000000002" y="350.40" font-size="9.4" fill="#444" text-anchor="end">2</text><rect x="882.5" y="453.3" width="10.5" height="10.5" fill="#48C6FC" stroke="#B9B9B9" stroke-width="0.8"/><rect x="882.5" y="468.5" width="10.5" height="10.5" fill="#FD8574" stroke="#B9B9B9" stroke-width="0.8"/><text x="894" y="462" font-size="9.06" fill="#3a3a3a">Введено документов</text><text x="894" y="477.2" font-size="9.06" fill="#3a3a3a">Изменено документов</text></svg>
</body></html>
